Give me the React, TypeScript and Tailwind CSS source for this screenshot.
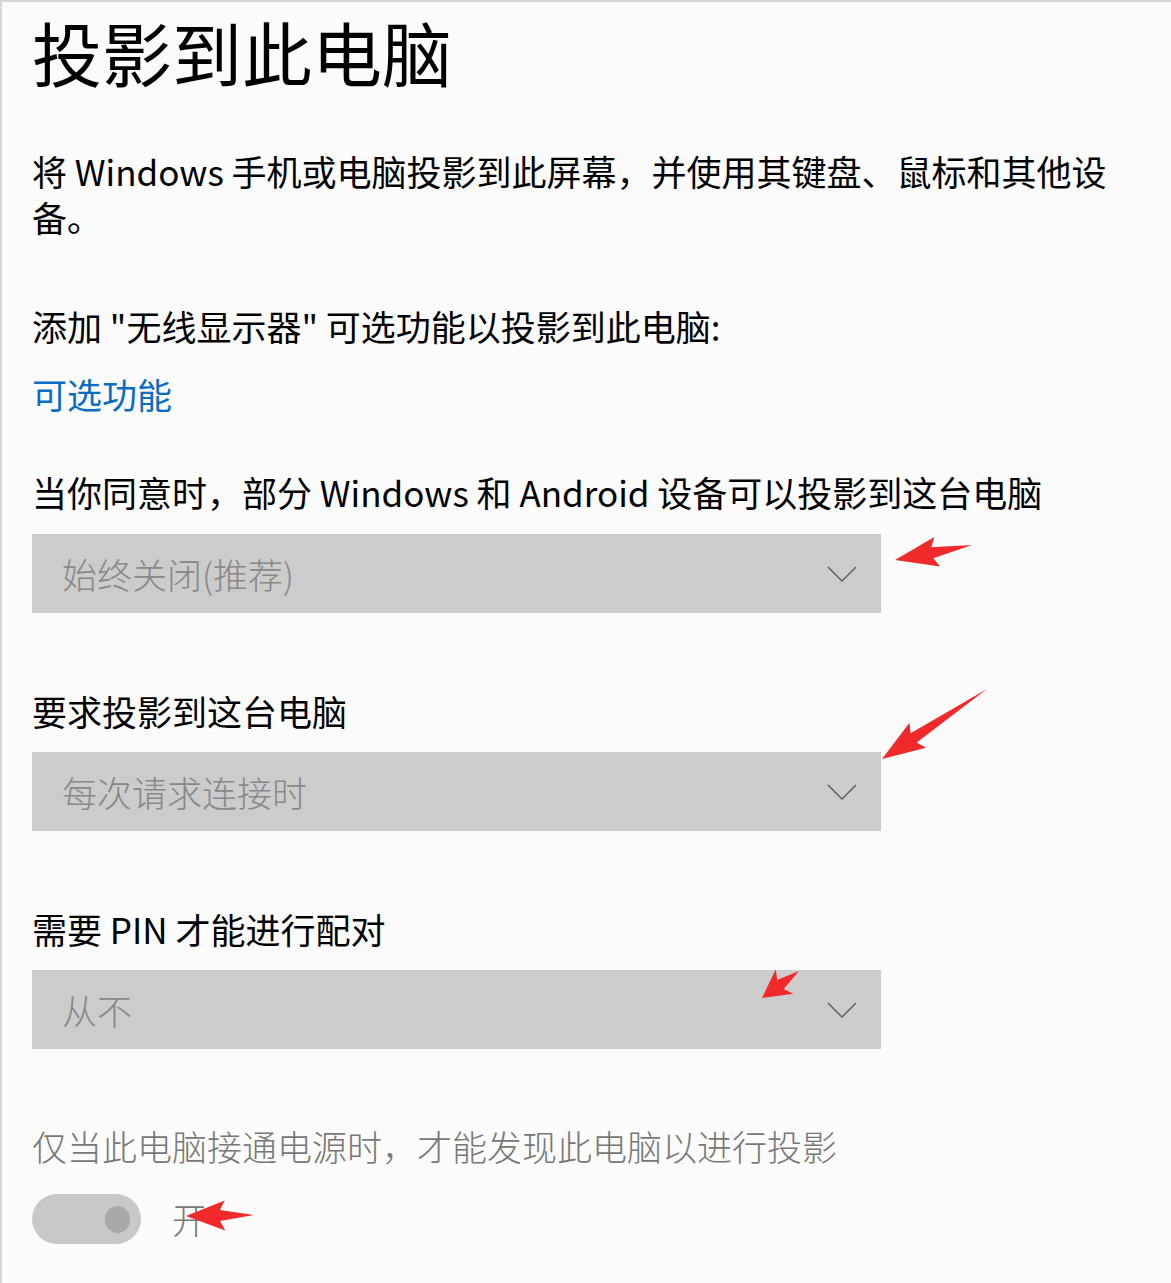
import React from "react";

const Chevron = () => (
  <svg width="30" height="16" viewBox="0 0 30 16" fill="none">
    <path d="M1 1 L15 15 L29 1" stroke="#5a5a5a" strokeWidth="1.4" />
  </svg>
);

const Dropdown = ({ label, className }: { label: string; className: string }) => (
  <div className={`flex h-[79px] w-[849px] items-center justify-between bg-[#cccccc] pl-[30px] pr-[24px] ${className}`}>
    <span className="text-[35px] leading-[46px] font-light text-[#888888]">{label}</span>
    <Chevron />
  </div>
);

const Arrow = ({ x1, y1, x2, y2 }: { x1: number; y1: number; x2: number; y2: number }) => {
  const dx = x2 - x1;
  const dy = y2 - y1;
  const len = Math.hypot(dx, dy);
  const ux = dx / len;
  const uy = dy / len;
  const nx = -uy;
  const ny = ux;
  const headLen = Math.min(38, len * 0.5);
  const bx = x2 - ux * headLen;
  const by = y2 - uy * headLen;
  const neck = 5.5;
  const wing = 15;
  const pts = [
    [x1, y1],
    [bx + nx * neck, by + ny * neck],
    [bx + nx * wing - ux * 5, by + ny * wing - uy * 5],
    [x2, y2],
    [bx - nx * wing - ux * 5, by - ny * wing - uy * 5],
    [bx - nx * neck, by - ny * neck],
  ]
    .map((p) => p.join(","))
    .join(" ");
  return <polygon points={pts} fill="#f02a2a" />;
};

export default function App() {
  return (
    <div
      className="relative h-[1283px] w-[1171px] overflow-hidden border-l-2 border-t-2 border-[#d6d6d6] bg-[#fbfbfb] pl-[30px] text-black"
      style={{ fontFamily: '"Noto Sans CJK SC", "Noto Sans", sans-serif' }}
    >
      <h1 className="text-[70px] leading-[100px] font-normal">投影到此电脑</h1>
      <p className="mt-[46px] w-[1090px] text-[35px] leading-[46px]">
        将 Windows 手机或电脑投影到此屏幕，并使用其键盘、鼠标和其他设备。
      </p>
      <p className="mt-[63px] text-[35px] leading-[46px]">添加 "无线显示器" 可选功能以投影到此电脑:</p>
      <p className="mt-[22px] text-[35px] leading-[46px] text-[#0a6cc2]">可选功能</p>
      <p className="mt-[52px] text-[35px] leading-[46px]">当你同意时，部分 Windows 和 Android 设备可以投影到这台电脑</p>
      <Dropdown label="始终关闭(推荐)" className="mt-[19px]" />
      <p className="mt-[75px] text-[35px] leading-[46px]">要求投影到这台电脑</p>
      <Dropdown label="每次请求连接时" className="mt-[18px]" />
      <p className="mt-[75px] text-[35px] leading-[46px]">需要 PIN 才能进行配对</p>
      <Dropdown label="从不" className="mt-[18px]" />
      <p className="mt-[74px] text-[35px] leading-[46px] font-light text-[#777777]">仅当此电脑接通电源时，才能发现此电脑以进行投影</p>
      <div className="mt-[25px] flex items-center gap-[31px]">
        <div className="flex h-[50px] w-[109px] items-center justify-end rounded-full bg-[#c8c8c8] pr-[11px]">
          <div className="h-[27px] w-[25px] rounded-full bg-[#a9a9a9]" />
        </div>
        <span className="text-[35px] leading-[46px] font-light text-[#777777]">开</span>
      </div>

      <svg className="pointer-events-none absolute left-0 top-0" width="1171" height="1283">
        <Arrow x1={970} y1={543} x2={893} y2={558} />
        <Arrow x1={985} y1={687} x2={880} y2={757} />
        <Arrow x1={797} y1={969} x2={760} y2={996} />
        <Arrow x1={252} y1={1213} x2={184} y2={1214} />
      </svg>
    </div>
  );
}
